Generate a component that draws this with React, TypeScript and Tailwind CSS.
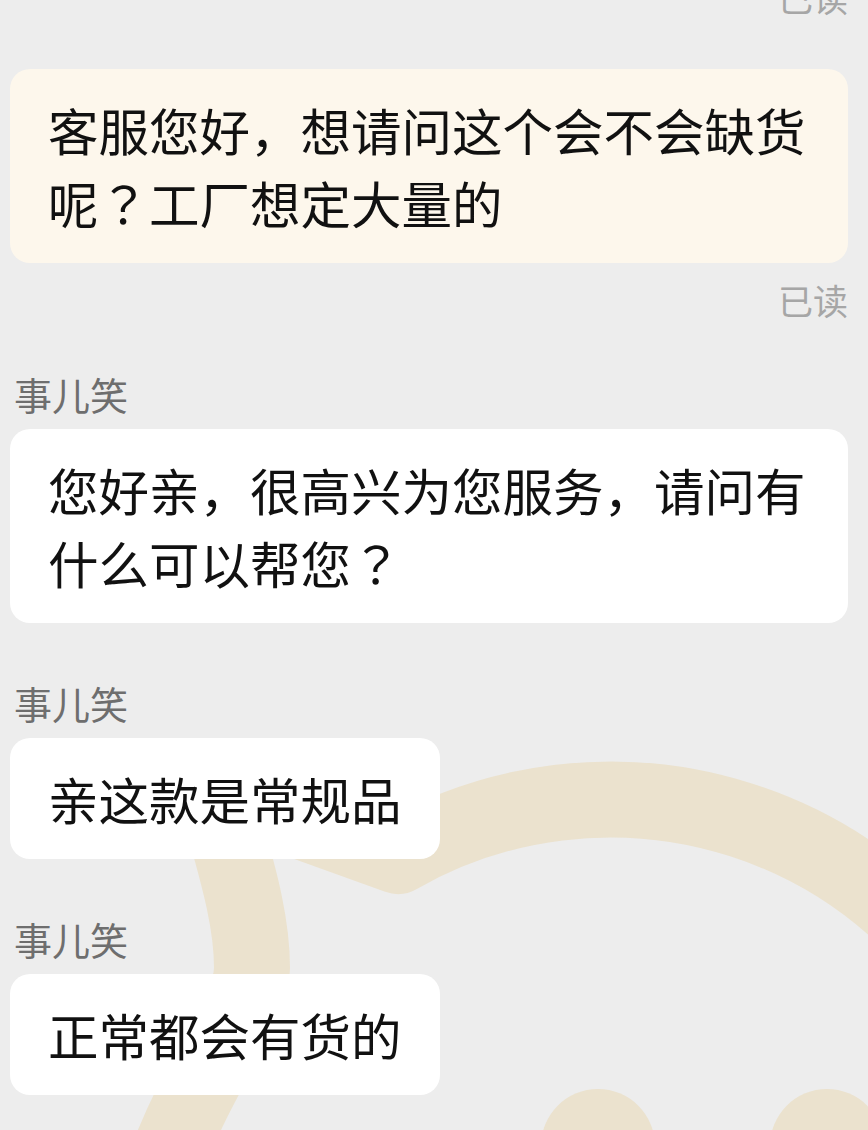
import React from 'react';

type Msg =
  | { kind: 'mine'; text: string; read?: boolean }
  | { kind: 'theirs'; name: string; text: string };

const messages: Msg[] = [
  { kind: 'mine', text: '客服您好，想请问这个会不会缺货呢？工厂想定大量的', read: true },
  { kind: 'theirs', name: '事儿笑', text: '您好亲，很高兴为您服务，请问有什么可以帮您？' },
  { kind: 'theirs', name: '事儿笑', text: '亲这款是常规品' },
  { kind: 'theirs', name: '事儿笑', text: '正常都会有货的' },
];

const Watermark: React.FC = () => (
  <svg
    className="absolute inset-0 z-0"
    width="868"
    height="1130"
    viewBox="0 0 868 1130"
    fill="none"
  >
    <path
      d="M 1000 1050 A 428 428 0 0 0 398 856 L 215 790 C 230 850 252 910 252 968 C 252 1010 200 1070 165 1165"
      stroke="#ebe2ce"
      strokeWidth="76"
      strokeLinecap="round"
      strokeLinejoin="round"
    />
    <circle cx="598" cy="1146" r="57" fill="#ebe2ce" />
    <circle cx="827" cy="1146" r="57" fill="#ebe2ce" />
  </svg>
);

// the fullwidth question mark sits centred in its cell in the reference
const renderText = (text: string) =>
  text.split(/(？)/).map((part, i) =>
    part === '？' ? (
      <span key={i} className="font-['Noto_Sans_CJK_JP',sans-serif]">
        ？
      </span>
    ) : (
      part
    )
  );

const Bubble: React.FC<{ text: string; mine?: boolean }> = ({ text, mine }) => (
  <div
    className={`self-start max-w-full rounded-[20px] py-[24px] pl-[38px] pr-[38px] text-[50.5px] leading-[73px] text-[#111111] ${
      mine ? 'bg-[#fdf7ec] w-full' : 'bg-white'
    }`}
  >
    {renderText(text)}
  </div>
);

const App: React.FC = () => {
  return (
    <div className="relative h-[1130px] w-full overflow-hidden bg-[#ededed] font-['Noto_Sans_CJK_SC','Noto_Sans',sans-serif]">
      <Watermark />

      <main className="relative z-10 flex flex-col pl-[10px] pr-[20px]">
        {/* read receipt of the previous message, cut off at the top */}
        <div className="-mt-[23px] self-end text-[35px] leading-[40px] text-[#a6a6a6]">已读</div>

        <div className="mt-[52px] flex flex-col">
          {messages.map((m, i) =>
            m.kind === 'mine' ? (
              <div key={i} className="flex flex-col">
                <Bubble text={m.text} mine />
                {m.read && (
                  <div className="mt-[17px] self-end text-[35px] leading-[40px] text-[#a6a6a6]">已读</div>
                )}
              </div>
            ) : (
              <div key={i} className={`flex flex-col ${i === 1 ? 'mt-[52px]' : 'mt-[58px]'}`}>
                <div className="ml-[4px] text-[38px] leading-[44px] text-[#6e6e6e]">{m.name}</div>
                <div className="mt-[13px] flex flex-col">
                  <Bubble text={m.text} />
                </div>
              </div>
            )
          )}
        </div>
      </main>
    </div>
  );
};

export default App;
